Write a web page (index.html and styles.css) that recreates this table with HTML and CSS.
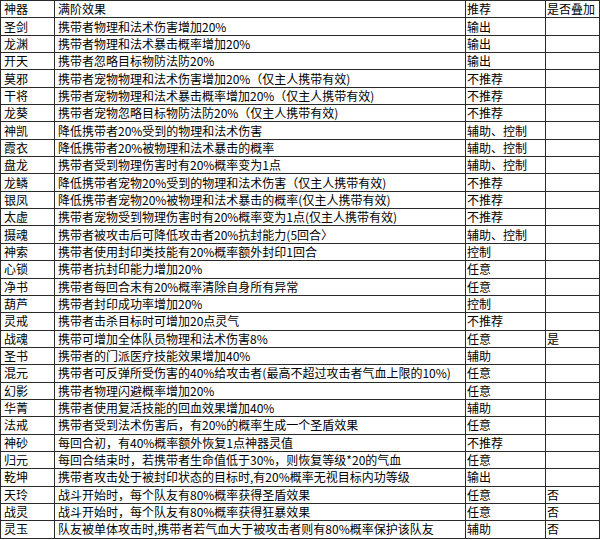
FILE: index.html
```html
<!DOCTYPE html>
<html lang="zh-CN">
<head>
<meta charset="utf-8">
<title>神器满阶效果</title>
<link rel="stylesheet" href="styles.css">
</head>
<body>
<table class="grid">
  <colgroup>
    <col class="c-name">
    <col class="c-effect">
    <col class="c-rec">
    <col class="c-stack">
  </colgroup>
  <thead>
    <tr><th class="name">神器</th><th class="effect">满阶效果</th><th class="rec">推荐</th><th class="stack">是否叠加</th></tr>
  </thead>
  <tbody>
    <tr><td class="name">圣剑</td><td class="effect">携带者物理和法术伤害增加20%</td><td class="rec">输出</td><td class="stack"></td></tr>
    <tr><td class="name">龙渊</td><td class="effect">携带者物理和法术暴击概率增加20%</td><td class="rec">输出</td><td class="stack"></td></tr>
    <tr><td class="name">开天</td><td class="effect">携带者忽略目标物防法防20%</td><td class="rec">输出</td><td class="stack"></td></tr>
    <tr><td class="name">莫邪</td><td class="effect">携带者宠物物理和法术伤害增加20%（仅主人携带有效)</td><td class="rec">不推荐</td><td class="stack"></td></tr>
    <tr><td class="name">干将</td><td class="effect">携带者宠物物理和法术暴击概率增加20%（仅主人携带有效)</td><td class="rec">不推荐</td><td class="stack"></td></tr>
    <tr><td class="name">龙葵</td><td class="effect">携带者宠物忽略目标物防法防20%（仅主人携带有效)</td><td class="rec">不推荐</td><td class="stack"></td></tr>
    <tr><td class="name">神凯</td><td class="effect">降低携带者20%受到的物理和法术伤害</td><td class="rec">辅助、控制</td><td class="stack"></td></tr>
    <tr><td class="name">霞衣</td><td class="effect">降低携带者20%被物理和法术暴击的概率</td><td class="rec">辅助、控制</td><td class="stack"></td></tr>
    <tr><td class="name">盘龙</td><td class="effect">携带者受到物理伤害时有20%概率变为1点</td><td class="rec">辅助、控制</td><td class="stack"></td></tr>
    <tr><td class="name">龙鳞</td><td class="effect">降低携带者宠物20%受到的物理和法术伤害（仅主人携带有效)</td><td class="rec">不推荐</td><td class="stack"></td></tr>
    <tr><td class="name">银凤</td><td class="effect">降低携带者宠物20%被物理和法术暴击的概率(仅主人携带有效)</td><td class="rec">不推荐</td><td class="stack"></td></tr>
    <tr><td class="name">太虚</td><td class="effect">携带者宠物受到物理伤害时有20%概率变为1点(仅主人携带有效)</td><td class="rec">不推荐</td><td class="stack"></td></tr>
    <tr><td class="name">摄魂</td><td class="effect">携带者被攻击后可降低攻击者20%抗封能力(5回合〉</td><td class="rec">辅助、控制</td><td class="stack"></td></tr>
    <tr><td class="name">神索</td><td class="effect">携带者使用封印类技能有20%概率额外封印1回合</td><td class="rec">控制</td><td class="stack"></td></tr>
    <tr><td class="name">心锁</td><td class="effect">携带者抗封印能力增加20%</td><td class="rec">任意</td><td class="stack"></td></tr>
    <tr><td class="name">净书</td><td class="effect">携带者每回合末有20%概率清除自身所有异常</td><td class="rec">任意</td><td class="stack"></td></tr>
    <tr><td class="name">葫芦</td><td class="effect">携带者封印成功率增加20%</td><td class="rec">控制</td><td class="stack"></td></tr>
    <tr><td class="name">灵戒</td><td class="effect">携带者击杀目标时可增加20点灵气</td><td class="rec">不推荐</td><td class="stack"></td></tr>
    <tr><td class="name">战魂</td><td class="effect">携带可增加全体队员物理和法术伤害8%</td><td class="rec">任意</td><td class="stack">是</td></tr>
    <tr><td class="name">圣书</td><td class="effect">携带者的门派医疗技能效果增加40%</td><td class="rec">辅助</td><td class="stack"></td></tr>
    <tr><td class="name">混元</td><td class="effect">携带者可反弹所受伤害的40%给攻击者(最高不超过攻击者气血上限的10%)</td><td class="rec">任意</td><td class="stack"></td></tr>
    <tr><td class="name">幻影</td><td class="effect">携带者物理闪避概率增加20%</td><td class="rec">任意</td><td class="stack"></td></tr>
    <tr><td class="name">华菁</td><td class="effect">携带者使用复活技能的回血效果增加40%</td><td class="rec">辅助</td><td class="stack"></td></tr>
    <tr><td class="name">法戒</td><td class="effect">携带者受到法术伤害后，有20%的概率生成一个圣盾效果</td><td class="rec">任意</td><td class="stack"></td></tr>
    <tr><td class="name">神砂</td><td class="effect">每回合初，有40%概率额外恢复1点神器灵值</td><td class="rec">不推荐</td><td class="stack"></td></tr>
    <tr><td class="name">归元</td><td class="effect">每回合结束时，若携带者生命值低于30%，则恢复等级*20的气血</td><td class="rec">任意</td><td class="stack"></td></tr>
    <tr><td class="name">乾坤</td><td class="effect">携带者攻击处于被封印状态的目标时,有20%概率无视目标内功等级</td><td class="rec">输出</td><td class="stack"></td></tr>
    <tr><td class="name">天玲</td><td class="effect">战斗开始时，每个队友有80%概率获得圣盾效果</td><td class="rec">任意</td><td class="stack">否</td></tr>
    <tr><td class="name">战灵</td><td class="effect">战斗开始时，每个队友有80%概率获得狂暴效果</td><td class="rec">任意</td><td class="stack">否</td></tr>
    <tr><td class="name">灵玉</td><td class="effect">队友被单体攻击时,携带者若气血大于被攻击者则有80%概率保护该队友</td><td class="rec">辅助</td><td class="stack">否</td></tr>
  </tbody>
</table>
</body>
</html>
```
FILE: styles.css
```css
html, body {
  margin: 0;
  padding: 0;
  background: #ffffff;
}

body {
  font-family: "Noto Sans CJK SC", "Noto Sans", sans-serif;
  font-size: 12px;
  color: #000000;
}

.grid {
  border-collapse: collapse;
  table-layout: fixed;
  width: 599px;
}

.c-name { width: 54px; }
.c-effect { width: 411px; }
.c-rec { width: 80px; }
.c-stack { width: 54px; }

.grid th,
.grid td {
  border: 1px solid #2a2a2a;
  padding: 0;
  height: 16.35px;
  line-height: 12px;
  text-align: left;
  font-weight: normal;
  vertical-align: middle;
  white-space: nowrap;
  overflow: hidden;
}

.grid .name { padding-left: 3px; }
.grid .effect { padding-left: 3px; }
.grid .rec { padding-left: 1px; }
.grid .stack { padding-left: 1px; }
```
